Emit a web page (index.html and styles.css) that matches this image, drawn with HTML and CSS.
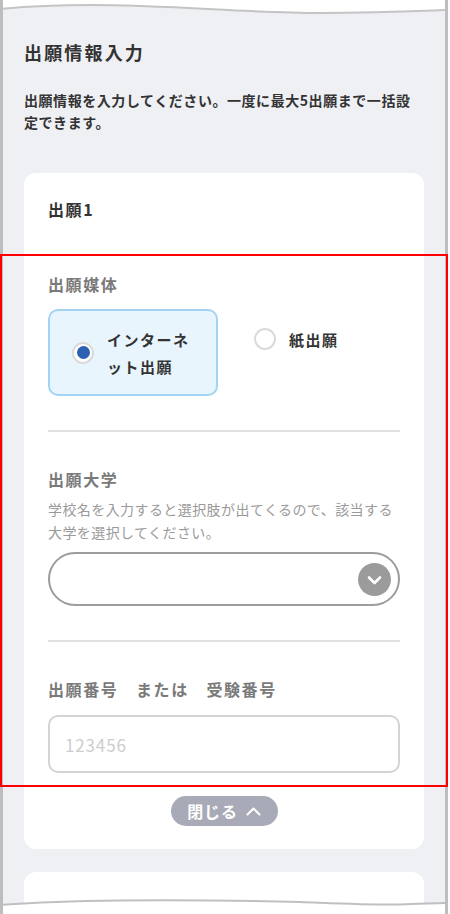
FILE: index.html
```html
<!DOCTYPE html>
<html lang="ja">
<head>
    <meta charset="UTF-8">
    <meta name="viewport" content="width=device-width, initial-scale=1.0">
    <title>出願情報入力</title>
    <link rel="stylesheet" href="styles.css">
</head>
<body>
    <div class="sheet">
        <h1 class="page-title">出願情報入力</h1>
        <p class="lead">出願情報を入力してください。一度に最大5出願まで一括設定できます。</p>

        <div class="card">
            <h2 class="card-title">出願1</h2>

            <div class="field with-divider">
                <div class="field-label">出願媒体</div>
                <div class="radio-group">
                    <div class="option is-selected">
                        <span class="radio-mark"></span>
                        <span class="option-text">インターネット出願</span>
                    </div>
                    <div class="option">
                        <span class="radio-mark"></span>
                        <span class="option-text">紙出願</span>
                    </div>
                </div>
            </div>

            <div class="field with-divider">
                <div class="field-label">出願大学</div>
                <p class="help">学校名を入力すると選択肢が出てくるので、該当する大学を選択してください。</p>
                <div class="select">
                    <span class="select-arrow">
                        <svg width="33" height="33" viewBox="0 0 33 33">
                            <circle cx="16.5" cy="16.5" r="16.5" fill="#9b9b9b"/>
                            <polyline points="11,14.5 16.5,20 22,14.5" fill="none" stroke="#fff" stroke-width="2.6" stroke-linecap="round" stroke-linejoin="round"/>
                        </svg>
                    </span>
                </div>
            </div>

            <div class="field">
                <div class="field-label">出願番号　または　受験番号</div>
                <input class="text-input" type="text" placeholder="123456">
            </div>

            <button class="close-btn">閉じる
                <svg width="15" height="9" viewBox="0 0 15 9">
                    <polyline points="1.5,7.5 7.5,1.5 13.5,7.5" fill="none" stroke="#fff" stroke-width="2" stroke-linecap="round" stroke-linejoin="round"/>
                </svg>
            </button>
        </div>

        <div class="card card-next"></div>

        <!-- torn paper edges -->
        <svg class="edge edge-top" width="448" height="20" viewBox="0 0 448 20">
            <path d="M0 0 H448 V10 C420 11 380 13 320 13 C250 13 170 5 90 5 C60 5 30 6 0 9 Z" fill="#fff"/>
            <path d="M0 9 C30 6 60 5 90 5 C170 5 250 13 320 13 C380 13 420 11 448 10" fill="none" stroke="#c4c4c4" stroke-width="2"/>
        </svg>
        <svg class="edge edge-bottom" width="448" height="24" viewBox="0 0 448 24">
            <path d="M0 15 C40 12 80 11 120 10.5 C200 10 260 11 300 12 C340 13.5 370 15 400 14.5 C420 14 440 13 448 13 V24 H0 Z" fill="#fff"/>
            <path d="M0 15 C40 12 80 11 120 10.5 C200 10 260 11 300 12 C340 13.5 370 15 400 14.5 C420 14 440 13 448 13" fill="none" stroke="#c0c0c0" stroke-width="2"/>
        </svg>
    </div>

    <div class="highlight"></div>
</body>
</html>
```

FILE: styles.css
```css
/* Base */
body {
    margin: 0;
    background: #fff;
    font-family: "Noto Sans CJK JP", "Noto Sans", sans-serif;
    color: #333;
}

/* Paper sheet */
.sheet {
    position: relative;
    box-sizing: border-box;
    width: 448px;
    height: 914px;
    overflow: hidden;
    padding: 38px 21px 0;
    background: #eff0f4;
    border-left: 3px solid #bdbdbd;
    border-right: 3px solid #bdbdbd;
}

.edge {
    position: absolute;
    left: -3px;
    display: block;
}

.edge-top {
    top: 0;
}

.edge-bottom {
    top: 890px;
}

.page-title {
    margin: 0;
    font-size: 18px;
    line-height: 28px;
    font-weight: 700;
    letter-spacing: 0.12em;
    color: #333;
}

.lead {
    margin: 23px 0 0;
    font-size: 14px;
    line-height: 22px;
    font-weight: 700;
    letter-spacing: 0.04em;
    color: #333;
}

/* Card */
.card {
    margin-top: 40px;
    background: #fff;
    border-radius: 12px;
    padding: 24px 24px 23px;
}

.card-next {
    margin-top: 23px;
    height: 100px;
    padding: 0;
}

.card-title {
    margin: 0 0 16px;
    font-size: 16px;
    line-height: 24px;
    font-weight: 700;
    letter-spacing: 0.1em;
    color: #333;
}

.field {
    padding-top: 35px;
}

.field.with-divider {
    padding-bottom: 34px;
    border-bottom: 2px solid #e2e2e2;
}

.field-label {
    font-size: 16px;
    line-height: 24px;
    font-weight: 700;
    letter-spacing: 0.1em;
    color: #7a7a7a;
}

/* Radio buttons */
.radio-group {
    display: flex;
    align-items: flex-start;
    gap: 12px;
    margin-top: 13px;
}

.option {
    display: flex;
    align-items: center;
    gap: 13px;
    box-sizing: border-box;
    width: 171px;
    padding: 14.5px 20px 14.5px 22px;
    border: 2px solid transparent;
    border-radius: 10px;
}

.option.is-selected {
    background: #e8f5fd;
    border-color: #a2d3f3;
}

.radio-mark {
    flex-shrink: 0;
    display: flex;
    align-items: center;
    justify-content: center;
    box-sizing: border-box;
    width: 22px;
    height: 22px;
    border: 2px solid #dadada;
    border-radius: 50%;
    background: #fff;
}

.option.is-selected .radio-mark::after {
    content: "";
    width: 13px;
    height: 13px;
    border-radius: 50%;
    background: #2b60b2;
}

.option-text {
    font-size: 15px;
    line-height: 27px;
    font-weight: 700;
    letter-spacing: 0.1em;
    color: #333;
}

/* University select */
.help {
    margin: 7px 0 8px;
    font-size: 14px;
    line-height: 23px;
    letter-spacing: 0.03em;
    color: #9a9a9a;
}

.select {
    display: flex;
    align-items: center;
    justify-content: flex-end;
    box-sizing: border-box;
    height: 54px;
    padding-right: 7px;
    border: 2px solid #9c9c9c;
    border-radius: 27px;
}

.select-arrow svg {
    display: block;
}

/* Number input */
.text-input {
    display: block;
    box-sizing: border-box;
    width: 100%;
    height: 58px;
    margin-top: 14px;
    padding: 0 15px;
    border: 2px solid #d4d4d4;
    border-radius: 10px;
    font-family: inherit;
    font-size: 17px;
    letter-spacing: 0.05em;
    color: #333;
    outline: none;
}

.text-input::placeholder {
    color: #cdcdcd;
}

/* Close button */
.close-btn {
    display: flex;
    align-items: center;
    justify-content: center;
    gap: 8px;
    width: 107px;
    height: 30px;
    margin: 23px auto 0;
    padding: 0;
    border: none;
    border-radius: 15px;
    background: #a8abb7;
    color: #fff;
    font-family: inherit;
    font-size: 16px;
    font-weight: 700;
    letter-spacing: 0.05em;
}

/* Annotation frame */
.highlight {
    position: absolute;
    left: 0;
    top: 254px;
    box-sizing: border-box;
    width: 448px;
    height: 533px;
    border: 2px solid #ff0000;
}
```
